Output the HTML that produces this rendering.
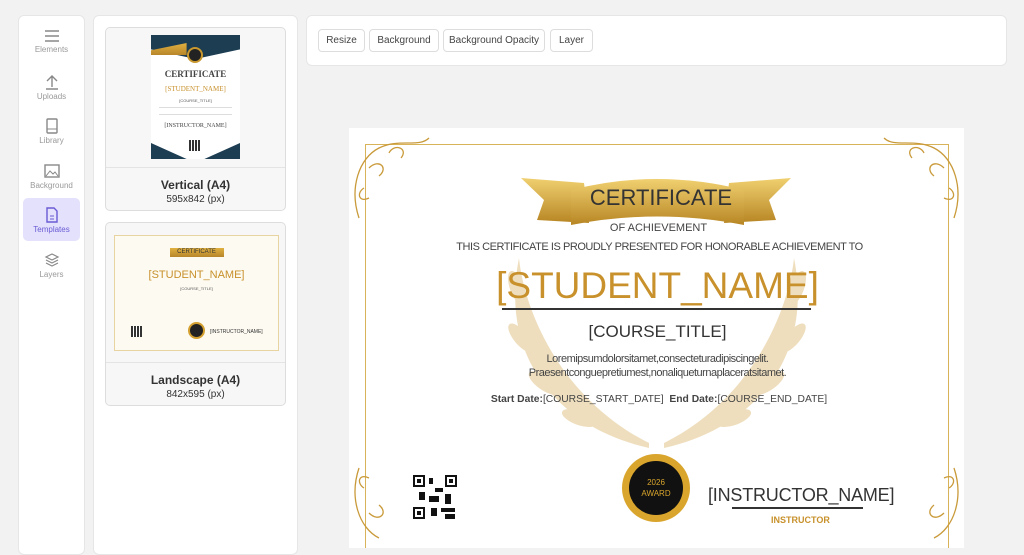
<!DOCTYPE html>
<html><head><meta charset="utf-8"><style>
*{margin:0;padding:0;box-sizing:border-box}
body{width:1024px;height:544px;overflow:hidden;background:#f2f2f2;font-family:"Liberation Sans",sans-serif;position:relative}
.abs{position:absolute}
.panel{position:absolute;background:#fff;border:1px solid #e6e6e6;border-radius:6px}
.nav{position:absolute;left:23px;width:57px;height:44px;text-align:center;font-size:8px;color:#999}
.nav svg{display:block;margin:4px auto 2px}
.card{position:absolute;left:105px;width:181px;height:184px;background:#f7f7f7;border:1px solid #ddd;border-radius:5px;overflow:hidden}
.card .cap{position:absolute;top:139px;left:0;right:0;bottom:0;border-top:1px solid #e4e4e4;text-align:center;color:#333}
.card .t{font-size:12px;font-weight:bold;margin-top:10px}
.card .s{font-size:10px;margin-top:2px}
.btn{position:absolute;top:29px;height:23px;border:1px solid #ddd;border-radius:4px;background:#fff;font-size:10px;color:#444;line-height:21px;text-align:center}
.c{position:absolute;left:0;right:0;text-align:center;white-space:nowrap}
</style></head><body>
<div class="panel" style="left:18px;top:15px;width:67px;height:540px"></div>
<div class="nav" style="top:25px"><svg width="16" height="14"><path d="M1 2h14M1 7h14M1 12h14" stroke="#888" stroke-width="1.5"/></svg>Elements</div>
<div class="nav" style="top:70px"><svg width="16" height="16"><path d="M8 13V2M3 7l5-5 5 5M2 15h12" stroke="#888" stroke-width="1.4" fill="none"/></svg>Uploads</div>
<div class="nav" style="top:114px"><svg width="16" height="16"><rect x="3" y="1" width="10" height="14" rx="1" stroke="#888" stroke-width="1.4" fill="none"/><path d="M3 11h10" stroke="#888"/></svg>Library</div>
<div class="nav" style="top:159px"><svg width="16" height="16"><rect x="1" y="2" width="14" height="12" stroke="#888" stroke-width="1.4" fill="none"/><path d="M2 13l4-5 3 3 2-2 3 4" stroke="#888" fill="none"/></svg>Background</div>
<div class="abs" style="left:23px;top:198px;width:57px;height:43px;background:#e3e1fb;border-radius:5px"></div>
<div class="nav" style="top:203px;color:#6b5bd6"><svg width="16" height="16"><path d="M3 1h7l3 3v11H3z" stroke="#6b5bd6" stroke-width="1.4" fill="none"/><path d="M6 9h4M6 12h4" stroke="#6b5bd6"/></svg>Templates</div>
<div class="nav" style="top:248px"><svg width="16" height="16"><path d="M8 2l6 3-6 3-6-3zM2 8l6 3 6-3M2 11l6 3 6-3" stroke="#888" stroke-width="1.2" fill="none"/></svg>Layers</div>

<div class="panel" style="left:93px;top:15px;width:205px;height:540px"></div>
<div class="card" style="top:27px">
 <div class="abs" style="left:45px;top:7px;width:89px;height:124px;background:#fff;overflow:hidden">
  <div class="abs" style="left:0;top:0;width:89px;height:24px;background:#1c3d52;clip-path:polygon(0 0,100% 0,100% 60%,50% 100%,0 60%)"></div>
  <div class="abs" style="left:0;top:8px;width:89px;height:12px;background:linear-gradient(#e0b040,#b8862a);clip-path:polygon(0 60%,40% 0,40% 100%,0 100%)"></div>
  <div class="abs" style="left:36px;top:12px;width:16px;height:16px;border-radius:50%;background:#222;border:2px solid #c9982f"></div>
  <div class="c" style="top:34px;font-family:'Liberation Serif',serif;font-size:9px;font-weight:bold;color:#444">CERTIFICATE</div>
  <div class="c" style="top:50px;font-family:'Liberation Serif',serif;font-size:7px;color:#c8912c">[STUDENT_NAME]</div>
  <div class="c" style="top:63px;font-size:4px;color:#555">[COURSE_TITLE]</div>
  <div class="abs" style="left:8px;top:72px;width:73px;height:8px;border-top:1px solid #ddd;border-bottom:1px solid #ddd"></div>
  <div class="c" style="top:88px;font-family:'Liberation Serif',serif;font-size:6px;color:#444">[INSTRUCTOR_NAME]</div>
  <div class="abs" style="left:38px;top:105px;width:11px;height:11px;background:repeating-linear-gradient(90deg,#333 0 2px,#fff 2px 3px)"></div>
  <div class="abs" style="left:0;bottom:0;width:89px;height:16px;background:#1c3d52;clip-path:polygon(0 0,40% 100%,60% 100%,100% 0,100% 100%,0 100%)"></div>
 </div>
 <div class="cap"><div class="t">Vertical (A4)</div><div class="s">595x842 (px)</div></div>
</div>
<div class="card" style="top:222px">
 <div class="abs" style="left:8px;top:12px;width:165px;height:116px;background:#fdfaf1;border:1px solid #e8d4a0">
  <div class="abs" style="left:55px;top:12px;width:54px;height:9px;background:linear-gradient(#e0b040,#b8862a)"></div>
  <div class="c" style="top:13px;font-size:6px;color:#333">CERTIFICATE</div>
  <div class="c" style="top:33px;font-size:11px;color:#c8912c">[STUDENT_NAME]</div>
  <div class="c" style="top:50px;font-size:4px;color:#555">[COURSE_TITLE]</div>
  <div class="abs" style="left:16px;top:90px;width:11px;height:11px;background:repeating-linear-gradient(90deg,#333 0 2px,#fff 2px 3px)"></div>
  <div class="abs" style="left:73px;top:86px;width:17px;height:17px;border-radius:50%;background:#222;border:2px solid #d4a030"></div>
  <div class="abs" style="left:95px;top:93px;font-size:5px;color:#333">[INSTRUCTOR_NAME]</div>
 </div>
 <div class="cap"><div class="t">Landscape (A4)</div><div class="s">842x595 (px)</div></div>
</div>

<div class="panel" style="left:306px;top:15px;width:701px;height:51px"></div>
<div class="btn" style="left:318px;width:47px">Resize</div>
<div class="btn" style="left:369px;width:70px">Background</div>
<div class="btn" style="left:443px;width:102px">Background Opacity</div>
<div class="btn" style="left:550px;width:43px">Layer</div>

<div class="abs" style="left:349px;top:128px;width:615px;height:420px;background:#fff;overflow:hidden">
 <div class="abs" style="left:16px;top:16px;width:584px;height:410px;border:1.5px solid #d9b35a"></div>
 <svg class="abs" style="left:0;top:0" width="615" height="420">
  <g fill="none" stroke="#c99a3a" stroke-width="1.3">
   <path d="M10 90 C0 60 10 30 30 20 C50 10 70 20 80 10 M20 40 c10 -10 20 0 10 8 M40 25 c5 -10 20 -5 12 5 M15 60 c-8 5 -5 15 5 10"/>
   <path d="M605 90 C615 60 605 30 585 20 C565 10 545 20 535 10 M595 40 c-10 -10 -20 0 -10 8 M575 25 c-5 -10 -20 -5 -12 5 M600 60 c8 5 5 15 -5 10"/>
   <path d="M10 340 C0 370 10 400 30 410 M20 385 c10 10 20 0 10 -8 M15 360 c-8 -5 -5 -15 5 -10"/>
   <path d="M605 340 C615 370 605 400 585 410 M595 385 c-10 10 -20 0 -10 -8 M600 360 c8 -5 5 -15 -5 -10"/>
  </g>
  <g fill="#ecd9b2" opacity="0.85">
   <path d="M300 320 C210 300 150 230 170 130 C175 180 210 270 300 315Z"/>
   <path d="M315 320 C405 300 465 230 445 130 C440 180 405 270 315 315Z"/>
   <ellipse cx="168" cy="160" rx="7" ry="18" transform="rotate(-20 168 160)"/>
   <ellipse cx="172" cy="210" rx="7" ry="18" transform="rotate(-40 172 210)"/>
   <ellipse cx="195" cy="255" rx="7" ry="18" transform="rotate(-55 195 255)"/>
   <ellipse cx="230" cy="290" rx="7" ry="18" transform="rotate(-70 230 290)"/>
   <ellipse cx="448" cy="160" rx="7" ry="18" transform="rotate(20 448 160)"/>
   <ellipse cx="444" cy="210" rx="7" ry="18" transform="rotate(40 444 210)"/>
   <ellipse cx="420" cy="255" rx="7" ry="18" transform="rotate(55 420 255)"/>
   <ellipse cx="385" cy="290" rx="7" ry="18" transform="rotate(70 385 290)"/>
  </g>
  <defs><linearGradient id="g" x1="0" y1="0" x2="0" y2="1"><stop offset="0" stop-color="#f0d070"/><stop offset="1" stop-color="#b88624"/></linearGradient></defs>
  <path d="M172 50 L235 55 L240 95 L188 92 L195 72Z" fill="url(#g)"/>
  <path d="M442 50 L380 55 L375 95 L427 92 L420 72Z" fill="url(#g)"/>
  <path d="M222 62 Q308 40 395 62 L395 97 Q308 80 222 97Z" fill="url(#g)"/>
  <circle cx="307" cy="360" r="34" fill="#d9a52c"/>
  <circle cx="307" cy="360" r="27" fill="#111"/>
  <text x="307" y="357" font-size="8" fill="#d9a52c" text-anchor="middle" font-family="Liberation Sans">2026</text>
  <text x="307" y="368" font-size="8" fill="#d9a52c" text-anchor="middle" font-family="Liberation Sans">AWARD</text>
  <rect x="64" y="347" width="44" height="44" fill="#fff"/>
  <g fill="#111"><rect x="64" y="347" width="12" height="12"/><rect x="96" y="347" width="12" height="12"/><rect x="64" y="379" width="12" height="12"/>
  <rect x="80" y="350" width="4" height="6"/><rect x="86" y="360" width="8" height="4"/><rect x="70" y="364" width="6" height="8"/><rect x="80" y="368" width="10" height="6"/><rect x="96" y="366" width="6" height="10"/><rect x="82" y="380" width="6" height="8"/><rect x="92" y="380" width="14" height="4"/><rect x="96" y="386" width="10" height="5"/></g>
  <g fill="#fff"><rect x="66" y="349" width="8" height="8"/><rect x="98" y="349" width="8" height="8"/><rect x="66" y="381" width="8" height="8"/></g>
  <g fill="#111"><rect x="68" y="351" width="4" height="4"/><rect x="100" y="351" width="4" height="4"/><rect x="68" y="383" width="4" height="4"/></g>
 </svg>
 <div class="c" style="left:9px;top:57px;font-size:22px;color:#333">CERTIFICATE</div>
 <div class="c" style="left:4px;top:94px;font-size:11px;color:#444">OF ACHIEVEMENT</div>
 <div class="c" style="left:6px;top:113px;font-size:11px;color:#444;letter-spacing:-0.45px">THIS CERTIFICATE IS PROUDLY PRESENTED FOR HONORABLE ACHIEVEMENT TO</div>
 <div class="c" style="left:2px;top:137px;font-size:37px;color:#c8912c">[STUDENT_NAME]</div>
 <div class="abs" style="left:153px;top:180px;width:309px;height:2px;background:#333"></div>
 <div class="c" style="left:2px;top:194px;font-size:17px;color:#333">[COURSE_TITLE]</div>
 <div class="c" style="left:2px;top:225px;font-size:11px;color:#444;letter-spacing:-0.5px">Loremipsumdolorsitamet,consecteturadipiscingelit.</div>
 <div class="c" style="left:2px;top:239px;font-size:11px;color:#444;letter-spacing:-0.5px">Praesentconguepretiumest,nonaliqueturnaplaceratsitamet.</div>
 <div class="c" style="left:5px;top:266px;font-size:10.3px;color:#444"><b>Start Date:</b>[COURSE_START_DATE]&nbsp; <b>End Date:</b>[COURSE_END_DATE]</div>
 <div class="abs" style="left:359px;top:357px;font-size:18px;color:#333;letter-spacing:-0.2px">[INSTRUCTOR_NAME]</div>
 <div class="abs" style="left:383px;top:379px;width:131px;height:2px;background:#333"></div>
 <div class="abs" style="left:422px;top:387px;font-size:9px;color:#c8912c;font-weight:bold">INSTRUCTOR</div>
</div>
</body></html>
